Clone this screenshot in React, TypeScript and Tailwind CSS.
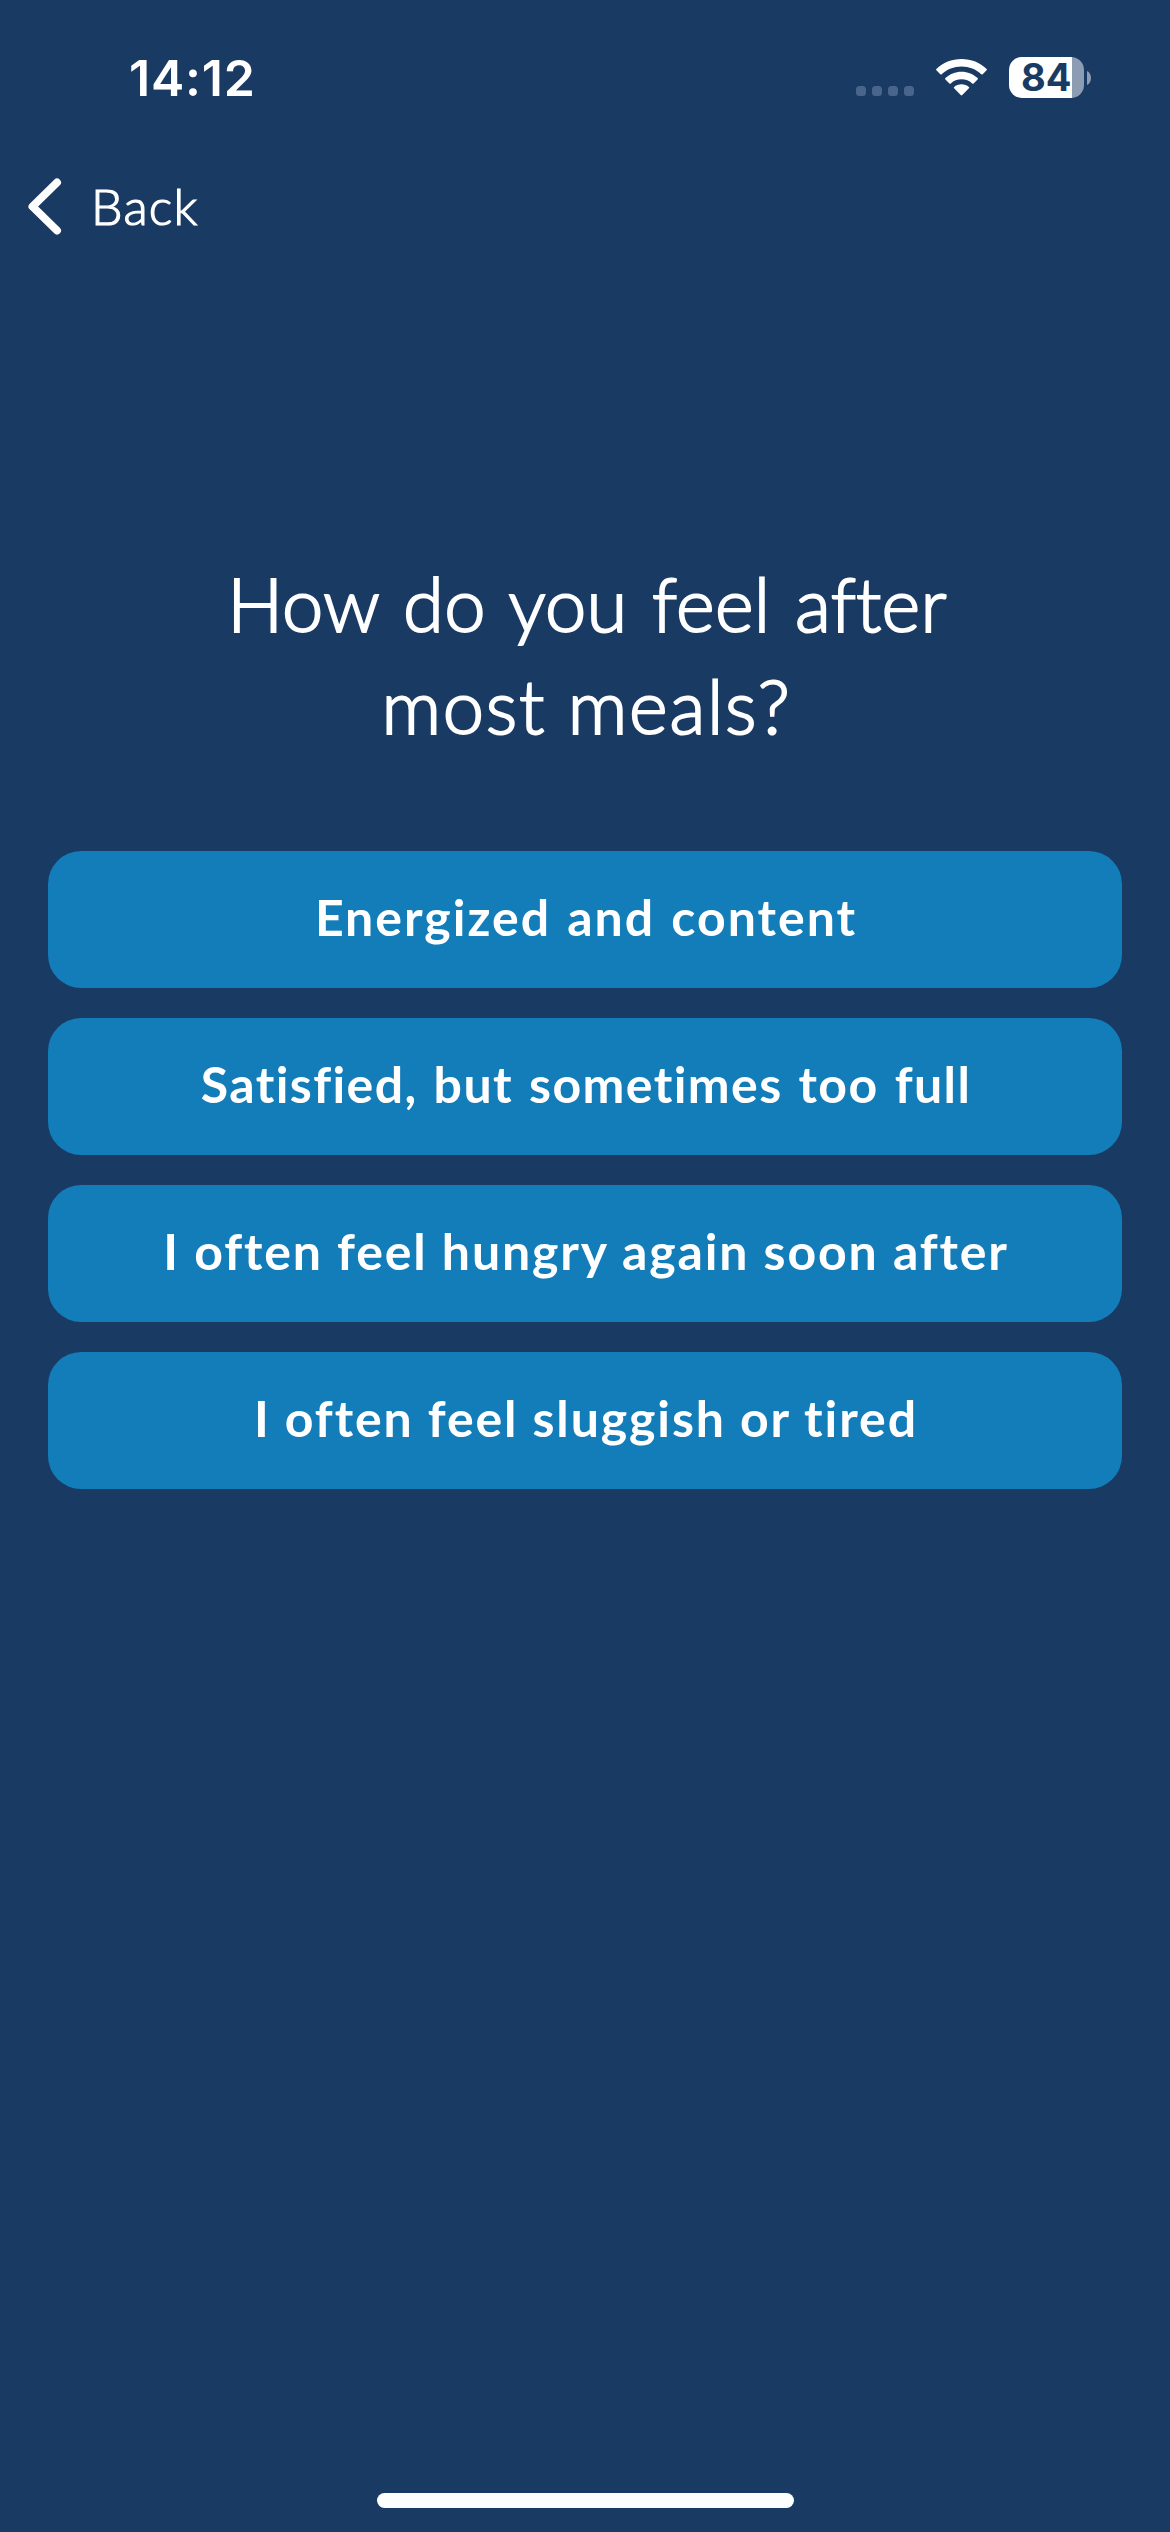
import React from "react";

const options = [
  { label: "Energized and content", spacing: "tracking-[2px] [word-spacing:2px]" },
  { label: "Satisfied, but sometimes too full", spacing: "tracking-[1.4px] [word-spacing:2.5px]" },
  { label: "I often feel hungry again soon after", spacing: "tracking-[1.85px] [word-spacing:0.3px]" },
  { label: "I often feel sluggish or tired", spacing: "tracking-[1.9px] [word-spacing:0px]" },
];

function WifiIcon() {
  return (
    <svg className="ml-[22px] mt-[59px] h-[37px] w-[51px]" viewBox="0 0 51 37" fill="#fff">
      <path d="M25.5 0C35.2 0 44.1 3.7 50.6 9.9Q51.3 10.6 50.6 11.3L46.7 15.2Q46 15.9 45.3 15.2C40 10.3 33.1 7.5 25.5 7.5S11 10.3 5.7 15.2Q5 15.9 4.3 15.2L.4 11.3Q-.3 10.6 .4 9.9C6.9 3.7 15.8 0 25.5 0Z" />
      <path d="M25.5 12.7C31.7 12.7 37.3 15.1 41.6 19.1Q42.3 19.8 41.6 20.5L37.6 24.4Q36.9 25.1 36.2 24.4C33.3 21.8 29.6 20.3 25.5 20.3S17.7 21.8 14.8 24.4Q14.1 25.1 13.4 24.4L9.4 20.5Q8.7 19.8 9.4 19.1C13.7 15.1 19.3 12.7 25.5 12.7Z" />
      <path d="M25.5 25.2C28.3 25.2 30.9 26.2 32.9 27.9Q33.6 28.6 32.9 29.3L26.3 36Q25.5 36.8 24.7 36L18.1 29.3Q17.4 28.6 18.1 27.9C20.1 26.2 22.7 25.2 25.5 25.2Z" />
    </svg>
  );
}

function Battery() {
  return (
    <div className="ml-[22px] mt-[57px] flex h-[41px] items-center">
      <div className="h-[41px] w-[75px] rounded-[13px] bg-linear-to-r from-white from-84% to-[#8c9db3] to-84% pl-3 font-[Inter,sans-serif] text-[38px] leading-[41px] font-bold text-[#193a62]">
        84
      </div>
      <svg className="ml-[3px] h-[14px] w-[4px]" viewBox="0 0 4 14" fill="#8c9db3">
        <path d="M0 0C2.5 1 4 3.7 4 7S2.5 13 0 14Z" />
      </svg>
    </div>
  );
}

export default function App() {
  return (
    <div className="flex h-[2532px] w-[1170px] flex-col bg-[#193a62] font-[Lato,sans-serif] text-white">
      <header className="flex h-[160px] items-start pl-[129px]">
        <div className="mt-[48px] w-[727px] font-[Inter,sans-serif] text-[50px] leading-[60px] font-semibold tracking-[0.8px]">
          14:12
        </div>
        <div className="mt-[86px] flex gap-1.5">
          {[0, 1, 2, 3].map((i) => (
            <div key={i} className="size-[10px] rounded-[3.5px] bg-[#4a658c]" />
          ))}
        </div>
        <WifiIcon />
        <Battery />
      </header>

      <nav className="flex h-[100px] items-start pl-[28px]">
        <svg className="mt-[18px] h-[57px] w-[34px]" viewBox="0 0 34 57" fill="none" stroke="#fff" strokeWidth="8" strokeLinecap="round" strokeLinejoin="round">
          <path d="M29 4.5L4.5 28.5L29 52.5" />
        </svg>
        <span className="mt-[16px] ml-[29px] text-[50px] leading-[60px] font-light tracking-[1.2px] [-webkit-text-stroke:1.2px_white]">
          Back
        </span>
      </nav>

      <main className="flex flex-col pt-[293px]">
        <h1 className="text-center text-[74px] leading-[102px] font-light [font-variant-ligatures:none] [-webkit-text-stroke:2px_white]">
          <span className="block pl-[4px] tracking-[0.25px] [word-spacing:4.3px]">How do you feel after</span>
          <span className="block pl-[3px] tracking-[1.7px] [word-spacing:0px]">most meals?</span>
        </h1>
        <div className="mt-[94px] flex flex-col gap-[30px] px-12">
          {options.map((o) => (
            <button
              key={o.label}
              className={`h-[137px] rounded-[33px] bg-[#137db9] pb-[6px] pl-[2px] text-center text-[50px] leading-[60px] font-bold whitespace-nowrap ${o.spacing}`}
            >
              {o.label}
            </button>
          ))}
        </div>
      </main>

      <div className="mt-auto mb-[24px] ml-[377px] h-[15px] w-[417px] rounded-full bg-[#fdfefe]" />
    </div>
  );
}
